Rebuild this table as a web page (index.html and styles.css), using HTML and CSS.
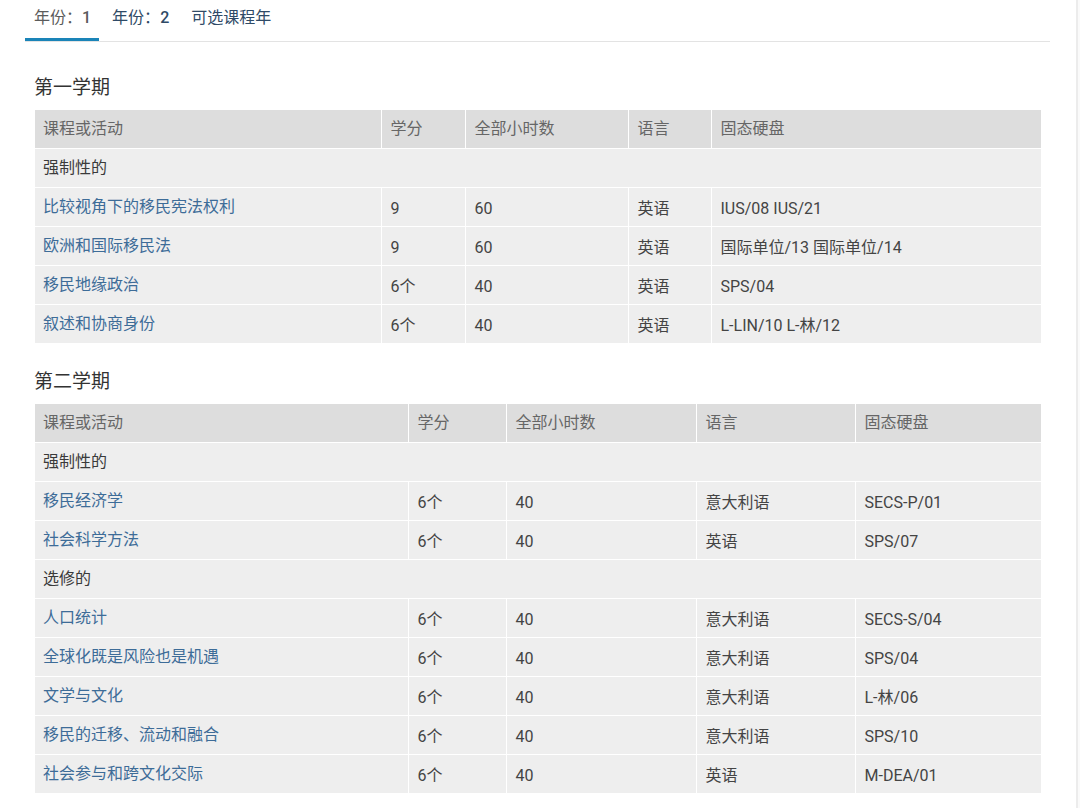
FILE: index.html
```html
<!DOCTYPE html>
<html lang="zh">
<head>
<meta charset="utf-8">
<title>课程</title>
<link rel="stylesheet" href="styles.css">
</head>
<body>
<div class="page">
  <main class="main">
    <nav class="tabs">
      <a class="tab active">年份：<b>1</b></a>
      <a class="tab">年份：<b>2</b></a>
      <a class="tab">可选课程年</a>
    </nav>

    <section class="term">
      <h2 class="term-title">第一学期</h2>
      <table class="courses t1">
        <colgroup>
          <col class="c1"><col class="c2"><col class="c3"><col class="c4"><col class="c5">
        </colgroup>
        <thead>
          <tr><th>课程或活动</th><th>学分</th><th>全部小时数</th><th>语言</th><th>固态硬盘</th></tr>
        </thead>
        <tbody>
          <tr class="group"><td colspan="5">强制性的</td></tr>
          <tr><td><a class="course">比较视角下的移民宪法权利</a></td><td>9</td><td>60</td><td>英语</td><td>IUS/08 IUS/21</td></tr>
          <tr><td><a class="course">欧洲和国际移民法</a></td><td>9</td><td>60</td><td>英语</td><td>国际单位/13 国际单位/14</td></tr>
          <tr><td><a class="course">移民地缘政治</a></td><td>6个</td><td>40</td><td>英语</td><td>SPS/04</td></tr>
          <tr><td><a class="course">叙述和协商身份</a></td><td>6个</td><td>40</td><td>英语</td><td>L-LIN/10 L-林/12</td></tr>
        </tbody>
      </table>
    </section>

    <section class="term">
      <h2 class="term-title second">第二学期</h2>
      <table class="courses t2">
        <colgroup>
          <col class="c1"><col class="c2"><col class="c3"><col class="c4"><col class="c5">
        </colgroup>
        <thead>
          <tr><th>课程或活动</th><th>学分</th><th>全部小时数</th><th>语言</th><th>固态硬盘</th></tr>
        </thead>
        <tbody>
          <tr class="group"><td colspan="5">强制性的</td></tr>
          <tr><td><a class="course">移民经济学</a></td><td>6个</td><td>40</td><td>意大利语</td><td>SECS-P/01</td></tr>
          <tr><td><a class="course">社会科学方法</a></td><td>6个</td><td>40</td><td>英语</td><td>SPS/07</td></tr>
          <tr class="group"><td colspan="5">选修的</td></tr>
          <tr><td><a class="course">人口统计</a></td><td>6个</td><td>40</td><td>意大利语</td><td>SECS-S/04</td></tr>
          <tr><td><a class="course">全球化既是风险也是机遇</a></td><td>6个</td><td>40</td><td>意大利语</td><td>SPS/04</td></tr>
          <tr><td><a class="course">文学与文化</a></td><td>6个</td><td>40</td><td>意大利语</td><td>L-林/06</td></tr>
          <tr><td><a class="course">移民的迁移、流动和融合</a></td><td>6个</td><td>40</td><td>意大利语</td><td>SPS/10</td></tr>
          <tr><td><a class="course">社会参与和跨文化交际</a></td><td>6个</td><td>40</td><td>英语</td><td>M-DEA/01</td></tr>
        </tbody>
      </table>
    </section>
  </main>
  <div class="rail"></div>
</div>
</body>
</html>
```

FILE: styles.css
```css
html, body {
  margin: 0;
  padding: 0;
  background: #ffffff;
}

body {
  font-family: Roboto, "Noto Sans CJK SC", "Noto Sans", sans-serif;
  font-size: 16px;
  color: #444444;
}

.page {
  display: flex;
  min-height: 808px;
}

.main {
  width: 1025px;
  padding-left: 25px;
  padding-right: 26px;
  box-sizing: content-box;
}

.rail {
  flex: 1;
  border-left: 2px solid #ececec;
  background: #fafafa;
}

/* Tabs */
.tabs {
  display: flex;
  gap: 4px;
  border-bottom: 1px solid #e3e3e3;
  height: 41px;
}

.tab {
  display: block;
  padding: 7px 9px 0;
  height: 31px;
  line-height: 22px;
  font-size: 16px;
  color: #2f4a66;
  cursor: pointer;
}

.tab b {
  font-weight: 500;
}

.tab.active {
  color: #5b5b5b;
  padding-right: 8px;
  border-bottom: 3px solid #1a84b8;
}

/* Terms */
.term-title {
  margin: 34px 0 10px 9px;
  font-size: 19px;
  font-weight: 400;
  line-height: 24px;
  color: #333333;
}

.term-title.second {
  margin-top: 27px;
}

.courses {
  margin-left: 10px;
  width: 1006px;
  table-layout: fixed;
  border-collapse: collapse;
  background: #eeeeee;
}

.courses th,
.courses td {
  border: 1px solid #ffffff;
  padding: 8px 9px;
  line-height: 22px;
  height: 22px;
  text-align: left;
  white-space: nowrap;
  overflow: hidden;
}

.courses thead th {
  border-top: 0;
}

.courses th:first-child,
.courses td:first-child {
  border-left: 0;
  padding-left: 8px;
}

.courses th:last-child,
.courses td:last-child {
  border-right: 0;
}

.courses tbody tr:last-child td {
  border-bottom: 0;
}

.courses th {
  background: #dddddd;
  color: #666666;
  font-weight: 400;
}

.courses td {
  color: #444444;
  padding-top: 10px;
  padding-bottom: 6px;
}

.courses tr.group td {
  padding-top: 8px;
  padding-bottom: 8px;
  color: #3a3a3a;
}

.course {
  display: inline-block;
  margin-top: -2px;
  vertical-align: top;
  color: #3d6c98;
  text-decoration: none;
  cursor: pointer;
}

.t1 .c1 { width: 346px; }
.t1 .c2 { width: 84px; }
.t1 .c3 { width: 163px; }
.t1 .c4 { width: 83px; }
.t1 .c5 { width: 330px; }

.t2 .c1 { width: 373px; }
.t2 .c2 { width: 98px; }
.t2 .c3 { width: 190px; }
.t2 .c4 { width: 159px; }
.t2 .c5 { width: 186px; }
```
